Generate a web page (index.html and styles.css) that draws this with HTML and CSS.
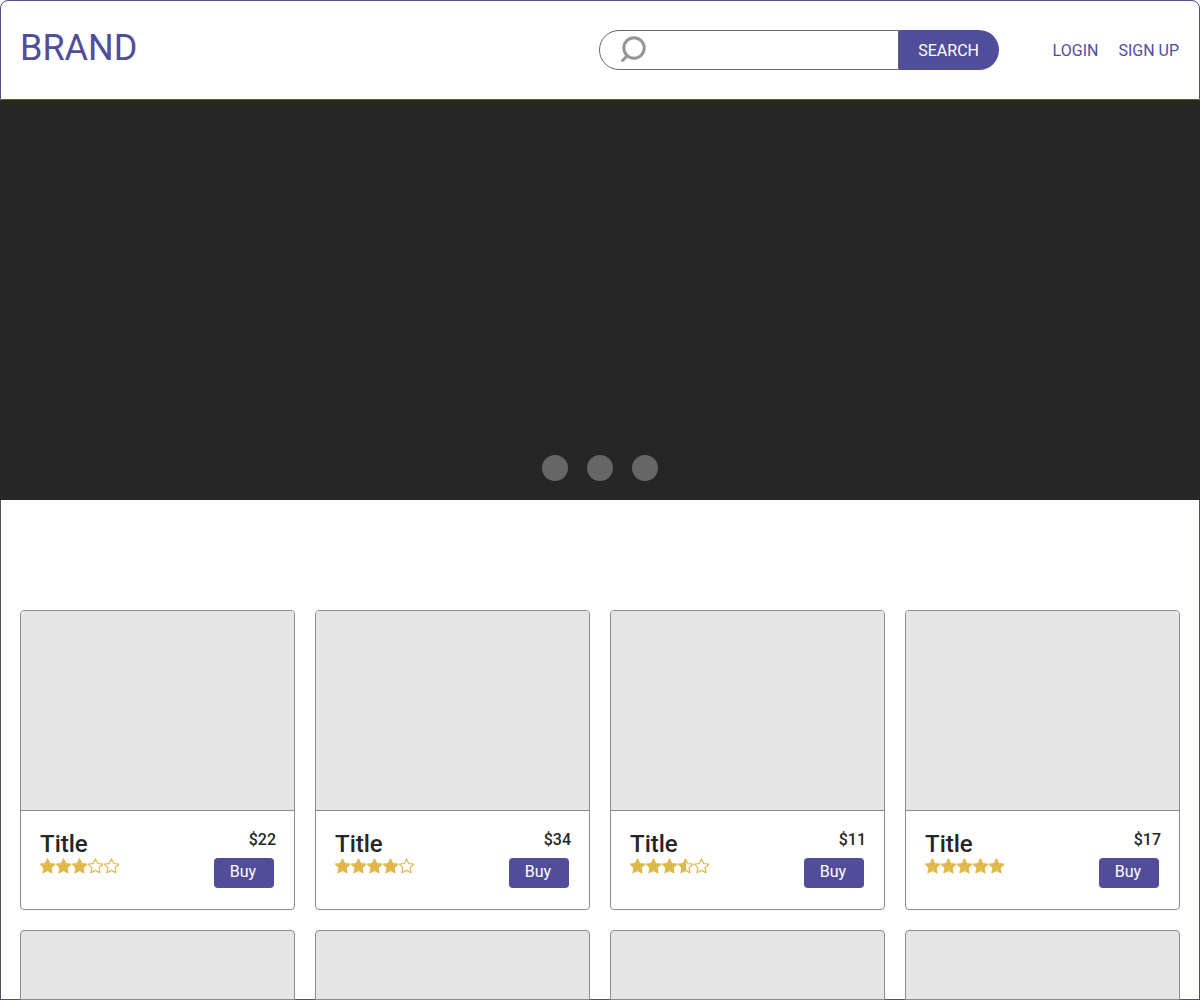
FILE: index.html
```html
<!DOCTYPE html>
<html lang="en">
<head>
<meta charset="utf-8">
<meta name="viewport" content="width=device-width, initial-scale=1">
<title>Brand</title>
<link rel="stylesheet" href="styles.css">
</head>
<body>
<svg class="defs" aria-hidden="true">
  <defs>
    <path id="star-shape" d="M7.500 .9 9.700 5.500 14.800 6.200 11.100 9.700 12 14.800 7.500 12.400 3 14.800 3.900 9.700 .500 6.200 5.300 5.500Z" stroke-linejoin="round" stroke-width="1.200"/>
    <symbol id="star-full" viewBox="0 0 16 16"><use href="#star-shape" fill="currentColor" stroke="currentColor"/></symbol>
    <symbol id="star-empty" viewBox="0 0 16 16"><use href="#star-shape" fill="none" stroke="currentColor"/></symbol>
    <symbol id="star-half" viewBox="0 0 16 16"><use href="#star-shape" fill="none" stroke="currentColor"/><path d="M8 .9V12.400H7.500L3 14.800 3.900 9.700 .500 6.200 5.300 5.500 7.500 .9Z" fill="currentColor"/></symbol>
  </defs>
</svg>
<header class="header">
  <a class="brand" href="#">BRAND</a>
  <form class="search" role="search">
    <label class="search-field">
      <svg class="search-icon" viewBox="0 0 26 28" aria-label="Search products"><circle cx="14" cy="12" r="10.200"/><path d="M7 20 2.500 24.500"/></svg>
      <input class="search-input" type="text" name="q">
    </label>
    <button class="search-button" type="submit">SEARCH</button>
  </form>
  <nav class="account">
    <a href="#">LOGIN</a>
    <a href="#">SIGN UP</a>
  </nav>
</header>
<section class="hero">
  <button class="dot" type="button" aria-label="Slide 1"></button>
  <button class="dot" type="button" aria-label="Slide 2"></button>
  <button class="dot" type="button" aria-label="Slide 3"></button>
</section>
<main class="products">
  <article class="card">
    <div class="photo"></div>
    <div class="details">
      <div>
        <h2 class="title">Title</h2>
        <div class="stars" role="img" aria-label="3 of 5 stars"><svg><use href="#star-full"/></svg><svg><use href="#star-full"/></svg><svg><use href="#star-full"/></svg><svg><use href="#star-empty"/></svg><svg><use href="#star-empty"/></svg></div>
      </div>
      <div class="purchase"><span class="price">$22</span><button class="buy" type="button">Buy</button></div>
    </div>
  </article>
  <article class="card">
    <div class="photo"></div>
    <div class="details">
      <div>
        <h2 class="title">Title</h2>
        <div class="stars" role="img" aria-label="4 of 5 stars"><svg><use href="#star-full"/></svg><svg><use href="#star-full"/></svg><svg><use href="#star-full"/></svg><svg><use href="#star-full"/></svg><svg><use href="#star-empty"/></svg></div>
      </div>
      <div class="purchase"><span class="price">$34</span><button class="buy" type="button">Buy</button></div>
    </div>
  </article>
  <article class="card">
    <div class="photo"></div>
    <div class="details">
      <div>
        <h2 class="title">Title</h2>
        <div class="stars" role="img" aria-label="3.5 of 5 stars"><svg><use href="#star-full"/></svg><svg><use href="#star-full"/></svg><svg><use href="#star-full"/></svg><svg><use href="#star-half"/></svg><svg><use href="#star-empty"/></svg></div>
      </div>
      <div class="purchase"><span class="price">$11</span><button class="buy" type="button">Buy</button></div>
    </div>
  </article>
  <article class="card">
    <div class="photo"></div>
    <div class="details">
      <div>
        <h2 class="title">Title</h2>
        <div class="stars" role="img" aria-label="5 of 5 stars"><svg><use href="#star-full"/></svg><svg><use href="#star-full"/></svg><svg><use href="#star-full"/></svg><svg><use href="#star-full"/></svg><svg><use href="#star-full"/></svg></div>
      </div>
      <div class="purchase"><span class="price">$17</span><button class="buy" type="button">Buy</button></div>
    </div>
  </article>
  <div class="card card-peek"></div>
  <div class="card card-peek"></div>
  <div class="card card-peek"></div>
  <div class="card card-peek"></div>
</main>
</body>
</html>
```

FILE: styles.css
```css
* {
  box-sizing: border-box;
}

body {
  margin: 0;
  background: #fff;
  color: #262626;
  font: 16px/20px Roboto, "Liberation Sans", sans-serif;
}

button,
input {
  font: inherit;
}

a {
  color: #504e9b;
  text-decoration: none;
}

.defs {
  display: none;
}

.header {
  display: flex;
  flex-wrap: wrap;
  align-items: center;
  min-height: 100px;
  padding: 0 20px 0 19px;
  border: 1px solid #504e9b;
  border-radius: 8px 8px 0 0;
}

.brand {
  font-size: 36px;
  line-height: 40px;
  padding-bottom: 4px;
}

.search {
  display: flex;
  width: 400px;
  height: 40px;
  margin-left: auto;
}

.search-field {
  display: flex;
  flex: 1;
  align-items: center;
  gap: 8px;
  padding: 0 8px 0 20px;
  border: 1px solid #666;
  border-radius: 20px 0 0 20px;
}

.search-icon {
  width: 26px;
  height: 28px;
  fill: none;
  stroke: #949494;
  stroke-width: 3;
  stroke-linecap: round;
}

.search-input {
  flex: 1;
  min-width: 0;
  border: 0;
  outline: 0;
  background: none;
}

.search-button {
  width: 100px;
  padding: 2px 0 0;
  border: 0;
  border-radius: 0 20px 20px 0;
  background: #504e9b;
  color: #fff;
}

.account {
  display: flex;
  gap: 20px;
  margin-left: 54px;
  padding-top: 2px;
}

.hero {
  display: flex;
  justify-content: center;
  align-items: flex-end;
  gap: 19px;
  min-height: 400px;
  padding-bottom: 19px;
  background: #262626;
}

.dot {
  width: 26px;
  height: 26px;
  padding: 0;
  border: 0;
  border-radius: 50%;
  background: #666;
}

.products {
  display: grid;
  grid-template-columns: repeat(auto-fit, minmax(240px, 1fr));
  gap: 20px;
  padding: 110px 19px 0;
  border: 1px solid #4d535f;
  border-top: 0;
}

.card {
  border: 1px solid #8c8c8c;
  border-radius: 4px;
  overflow: hidden;
}

.card-peek {
  height: 70px;
  margin-bottom: -1px;
  border-radius: 4px 4px 0 0;
  background: #e5e5e5;
}

.photo {
  height: 200px;
  border-bottom: 1px solid #8c8c8c;
  background: #e5e5e5;
}

.details {
  display: flex;
  justify-content: space-between;
  min-height: 98px;
  padding: 19px 18px 20px 19px;
}

.title {
  margin: 0;
  font-size: 24px;
  line-height: 28px;
  font-weight: 500;
}

.stars {
  display: flex;
  color: #e0b84c;
}

.stars svg {
  width: 16px;
  height: 16px;
}

.purchase {
  display: flex;
  flex-direction: column;
  align-items: flex-end;
  gap: 8px;
}

.price {
  font-weight: 500;
}

.buy {
  width: 60px;
  height: 30px;
  margin-right: 2px;
  padding: 0 2px 2px 0;
  border: 0;
  border-radius: 4px;
  background: #524d9b;
  color: #fff;
}
```
